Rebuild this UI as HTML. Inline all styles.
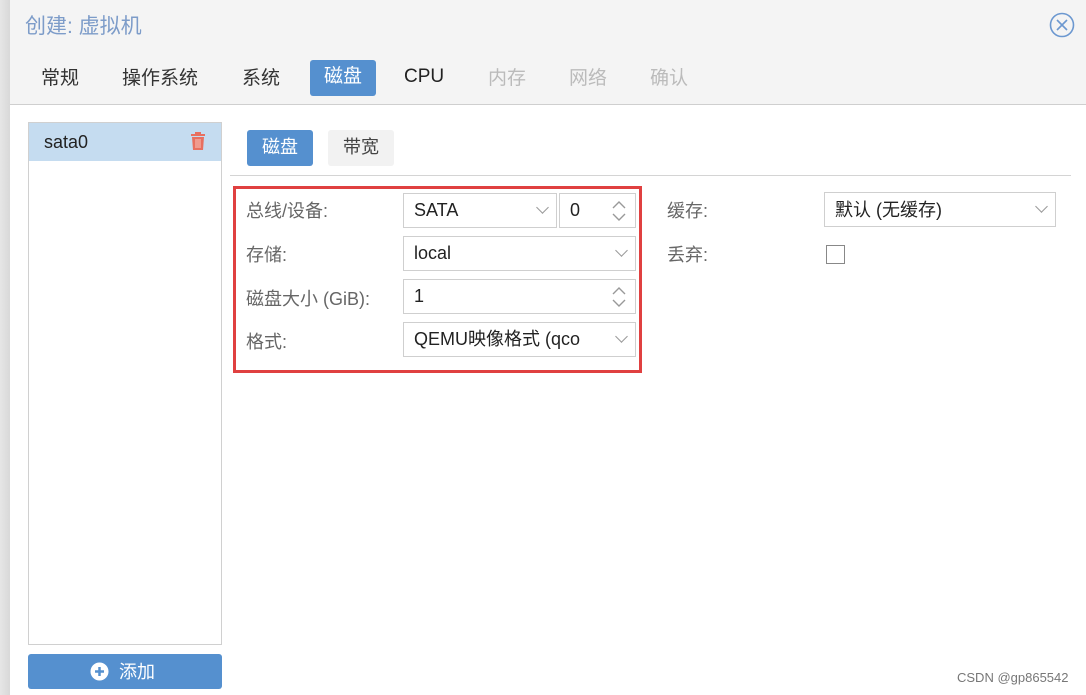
<!DOCTYPE html>
<html><head><meta charset="utf-8"><style>
*{box-sizing:border-box;margin:0;padding:0}
body{width:1086px;height:695px;overflow:hidden;background:#fff;font-family:"Liberation Sans","Noto Sans CJK SC",sans-serif;position:relative}
.a{position:absolute}
.f{position:absolute;border:1px solid #cfcfcf;background:#fff;font-size:18px;color:#222;padding-left:10px;line-height:32px}
.chev{position:absolute;right:9px;top:9px;width:9px;height:9px;border-right:1.5px solid #999;border-bottom:1.5px solid #999;transform:rotate(45deg)}
.lbl{position:absolute;font-size:18px;color:#666}
.sp{position:absolute;right:9px;top:4px}
</style></head><body>
<div class="a" style="left:0;top:0;width:10px;height:695px;background:linear-gradient(90deg,#e6e6e6,#d8d8d8)"></div>
<div class="a" style="left:10px;top:0;width:1076px;height:105px;background:#f4f4f4;border-bottom:1px solid #cfcfcf"></div>
<div class="a" style="left:25px;top:10px;font-size:21px;color:#7d9cc9">创建: 虚拟机</div>
<svg class="a" style="left:1049px;top:12px" width="26" height="26" viewBox="0 0 26 26"><circle cx="13" cy="13" r="11.5" fill="none" stroke="#6c98d0" stroke-width="1.6"/><path d="M8 8L18 18M18 8L8 18" stroke="#6c98d0" stroke-width="1.6"/></svg>
<div class="a" style="left:41px;top:63px;font-size:19px;color:#333">常规</div>
<div class="a" style="left:122px;top:63px;font-size:19px;color:#333">操作系统</div>
<div class="a" style="left:242px;top:63px;font-size:19px;color:#333">系统</div>
<div class="a" style="left:310px;top:60px;width:66px;height:36px;background:#5590cf;border-radius:3px;color:#fff;font-size:19px;text-align:center;line-height:34px">磁盘</div>
<div class="a" style="left:404px;top:66px;font-size:19px;color:#222">CPU</div>
<div class="a" style="left:488px;top:63px;font-size:19px;color:#bbb">内存</div>
<div class="a" style="left:569px;top:63px;font-size:19px;color:#bbb">网络</div>
<div class="a" style="left:650px;top:63px;font-size:19px;color:#bbb">确认</div>

<div class="a" style="left:28px;top:122px;width:194px;height:523px;border:1px solid #d0d0d0;background:#fff"></div>
<div class="a" style="left:29px;top:123px;width:192px;height:38px;background:#c5dcf0"></div>
<div class="a" style="left:44px;top:132px;font-size:18px;color:#222">sata0</div>
<svg class="a" style="left:190px;top:132px" width="16" height="18" viewBox="0 0 16 18"><rect x="1" y="2" width="14" height="2" fill="#e87060"/><rect x="5" y="0" width="6" height="2" fill="#e87060"/><path d="M2 5h12l-1 13H3z" fill="#e87060"/><path d="M6 7v9M8 7v9M10 7v9" stroke="#f7c4bc" stroke-width="1"/></svg>
<div class="a" style="left:28px;top:654px;width:194px;height:35px;background:#5590cf;border-radius:3px"></div>
<svg class="a" style="left:90px;top:662px" width="19" height="19" viewBox="0 0 19 19"><circle cx="9.5" cy="9.5" r="9" fill="#fff"/><path d="M5 9.5h9M9.5 5v9" stroke="#5590cf" stroke-width="2.5"/></svg>
<div class="a" style="left:119px;top:658px;font-size:18px;color:#fff">添加</div>

<div class="a" style="left:247px;top:130px;width:66px;height:36px;background:#5590cf;border-radius:3px;color:#fff;font-size:18px;text-align:center;line-height:34px">磁盘</div>
<div class="a" style="left:328px;top:130px;width:66px;height:36px;background:#f2f2f2;border-radius:3px;color:#444;font-size:18px;text-align:center;line-height:34px">带宽</div>
<div class="a" style="left:230px;top:175px;width:841px;height:1px;background:#d4d4d4"></div>

<div class="lbl" style="left:246px;top:197px">总线/设备:</div>
<div class="f" style="left:403px;top:193px;width:154px;height:35px">SATA<div class="chev"></div></div>
<div class="f" style="left:559px;top:193px;width:77px;height:35px">0<svg class="sp" width="14" height="26" viewBox="0 0 14 26"><path d="M1 10L7 4L13 10M1 16L7 22L13 16" fill="none" stroke="#999" stroke-width="1.4"/></svg></div>
<div class="lbl" style="left:246px;top:241px">存储:</div>
<div class="f" style="left:403px;top:236px;width:233px;height:35px">local<div class="chev"></div></div>
<div class="lbl" style="left:246px;top:285px">磁盘大小 (GiB):</div>
<div class="f" style="left:403px;top:279px;width:233px;height:35px">1<svg class="sp" width="14" height="26" viewBox="0 0 14 26"><path d="M1 10L7 4L13 10M1 16L7 22L13 16" fill="none" stroke="#999" stroke-width="1.4"/></svg></div>
<div class="lbl" style="left:246px;top:328px">格式:</div>
<div class="f" style="left:403px;top:322px;width:233px;height:35px;overflow:hidden;white-space:nowrap">QEMU映像格式 (qco<div class="chev"></div></div>
<div class="a" style="left:233px;top:186px;width:409px;height:187px;border:3px solid #e04040"></div>

<div class="lbl" style="left:667px;top:197px">缓存:</div>
<div class="f" style="left:824px;top:192px;width:232px;height:35px;line-height:34px">默认 (无缓存)<div class="chev"></div></div>
<div class="lbl" style="left:667px;top:241px">丢弃:</div>
<div class="a" style="left:826px;top:245px;width:19px;height:19px;border:1.5px solid #888;background:#fff"></div>
<div class="a" style="left:957px;top:670px;font-size:13px;color:#777">CSDN @gp865542</div>
</body></html>
